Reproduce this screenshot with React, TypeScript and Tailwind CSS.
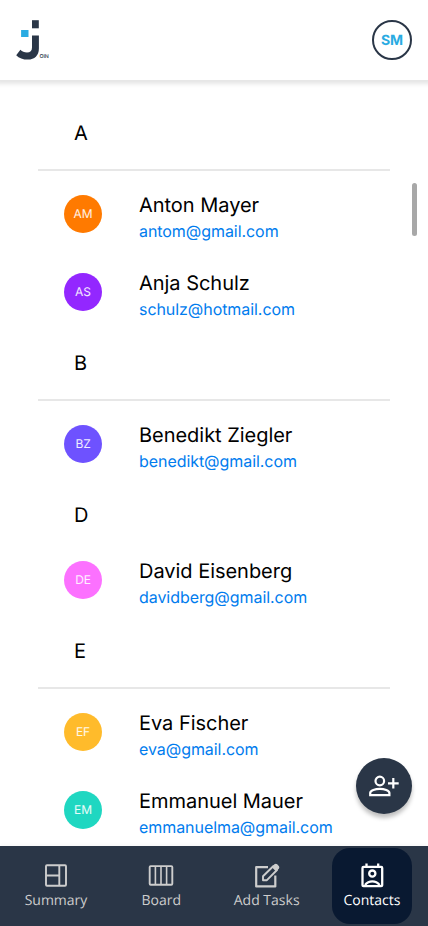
import React from "react";

type Contact = { initials: string; name: string; email: string; color: string };
type Group = { letter: string; divider: boolean; contacts: Contact[] };

const groups: Group[] = [
  {
    letter: "A",
    divider: true,
    contacts: [
      { initials: "AM", name: "Anton Mayer", email: "antom@gmail.com", color: "bg-[#ff7a00]" },
      { initials: "AS", name: "Anja Schulz", email: "schulz@hotmail.com", color: "bg-[#9327ff]" },
    ],
  },
  {
    letter: "B",
    divider: true,
    contacts: [{ initials: "BZ", name: "Benedikt Ziegler", email: "benedikt@gmail.com", color: "bg-[#6e52ff]" }],
  },
  {
    letter: "D",
    divider: false,
    contacts: [{ initials: "DE", name: "David Eisenberg", email: "davidberg@gmail.com", color: "bg-[#fc71ff]" }],
  },
  {
    letter: "E",
    divider: true,
    contacts: [
      { initials: "EF", name: "Eva Fischer", email: "eva@gmail.com", color: "bg-[#ffbb2b]" },
      { initials: "EM", name: "Emmanuel Mauer", email: "emmanuelma@gmail.com", color: "bg-[#1fd7c1]" },
    ],
  },
];

function Logo() {
  return (
    <div className="flex items-end">
      <svg width="23" height="40" viewBox="0 0 23 40" className="block">
        <rect x="16" y="0.2" width="6.8" height="8.1" fill="#2a3647" />
        <rect x="5.1" y="10" width="7.4" height="7" fill="#29abe2" />
        <path
          d="M16 15.4H22.9V28.5C22.9 35.5 18.5 39.6 12 39.6C7 39.6 3 38.2 0.2 35.2L4.4 29.8C6.2 31.6 8.2 32.6 11 32.6C14.3 32.6 16 31 16 27.5Z"
          fill="#2a3647"
        />
      </svg>
      <span className="ml-[0.5px] text-[5.3px] leading-[6px] font-medium tracking-[-0.1px] text-[#2a3647]">OIN</span>
    </div>
  );
}

function SummaryIcon() {
  return (
    <svg width="32" height="32" viewBox="0 0 32 32" fill="none" stroke="currentColor" strokeWidth="1.9">
      <rect x="6" y="5.2" width="20" height="20.6" rx="1" />
      <path d="M19.3 5.2V25.8M6 15.5H19.3" />
    </svg>
  );
}

function BoardIcon() {
  return (
    <svg width="32" height="32" viewBox="0 0 32 32" fill="none" stroke="currentColor" strokeWidth="1.9">
      <rect x="4.7" y="6.1" width="22.6" height="18.6" rx="1" />
      <path d="M10.4 6.1V24.7M16 6.1V24.7M21.6 6.1V24.7" strokeWidth="1.6" />
    </svg>
  );
}

function AddTaskIcon() {
  return (
    <svg width="32" height="32" viewBox="0 0 32 32" fill="none" stroke="currentColor" strokeWidth="2.2" strokeLinejoin="round">
      <path d="M17 7.2H5.2V26.4H24.3V15.5" />
      <path d="M12 20.2V16.2L22.2 6.2L26 10L15.9 20.2Z" strokeWidth="1.9" />
      <path d="M21.6 6.9L23.9 4.7Q24.8 4 25.7 4.8L27.3 6.4Q28 7.3 27.3 8.2L25.1 10.4Z" fill="currentColor" strokeWidth="1.4" />
    </svg>
  );
}

function ContactsIcon() {
  return (
    <svg width="32" height="32" viewBox="0 0 32 32" fill="none" stroke="currentColor" strokeWidth="2.3">
      <rect x="6.5" y="6.9" width="19.7" height="19.3" rx="1" />
      <path d="M10.5 3.6V7M22.2 3.6V7" />
      <circle cx="16.3" cy="13.6" r="3.1" />
      <path d="M9 25C11.2 22.2 13.6 21.3 16.3 21.3S21.4 22.2 23.6 25" />
    </svg>
  );
}

function AddPersonIcon() {
  return (
    <svg width="32" height="32" viewBox="0 0 32 32" fill="none" stroke="currentColor" strokeWidth="2.2">
      <circle cx="11.8" cy="11" r="4.3" />
      <path d="M2.2 25.2V23C2.2 20.4 7.3 18.8 11.8 18.8S21.4 20.4 21.4 23V25.2Z" />
      <path d="M25.3 8V18.6M20 13.3H30.7" />
    </svg>
  );
}

const navItems = [
  { label: "Summary", icon: <SummaryIcon />, active: false },
  { label: "Board", icon: <BoardIcon />, active: false },
  { label: "Add Tasks", icon: <AddTaskIcon />, active: false },
  { label: "Contacts", icon: <ContactsIcon />, active: true },
];

function ContactRow({ contact }: { contact: Contact }) {
  return (
    <div className="flex h-[78px] items-center pl-[26px]">
      <div
        className={`mb-2 flex size-[38px] shrink-0 items-center justify-center rounded-full text-xs tracking-[-0.1px] text-white/90 ${contact.color}`}
      >
        {contact.initials}
      </div>
      <div className="mb-0.5 ml-[37px] flex flex-col">
        <span className="text-xl leading-7 tracking-[-0.03px] text-black">{contact.name}</span>
        <span className="text-base leading-6 tracking-[-0.06px] text-[#007cee]">{contact.email}</span>
      </div>
    </div>
  );
}

export default function App() {
  return (
    <div className="relative flex h-[926px] w-[428px] flex-col overflow-hidden bg-white font-['Inter',sans-serif] [text-rendering:geometricPrecision]">
      <header className="z-10 flex h-20 shrink-0 items-center justify-between bg-white px-4 shadow-[0_0_4px_4px_rgba(0,0,0,0.1)]">
        <Logo />
        <div className="flex size-10 items-center justify-center rounded-full border-2 border-[#2a3647] pt-0.5 text-sm font-bold text-[#29abe2]">
          SM
        </div>
      </header>

      <main className="min-h-0 flex-1 overflow-hidden pt-[25px] pr-[38px] pl-[38px]">
        {groups.map((group) => (
          <section key={group.letter}>
            <h2 className="flex h-14 items-center pl-9 text-xl text-black">{group.letter}</h2>
            {group.divider ? <div className="my-2 h-0.5 bg-[#e7e7e7]" /> : <div className="h-0.5" />}
            {group.contacts.map((contact) => (
              <ContactRow key={contact.email} contact={contact} />
            ))}
          </section>
        ))}
      </main>

      <div className="absolute top-[183px] left-[412px] h-[53px] w-[5px] rounded-full bg-[#a8a8a8]" />
      <button
        aria-label="Add contact"
        className="absolute top-[758px] left-[356px] flex size-14 items-center justify-center rounded-full bg-[#2a3647] text-white shadow-[0_4px_4px_rgba(0,0,0,0.25)]"
      >
        <AddPersonIcon />
      </button>

      <nav className="z-10 flex h-20 shrink-0 items-center justify-between bg-[#2a3647] px-4 font-['Open_Sans',sans-serif] shadow-[0_-1px_4px_rgba(0,0,0,0.04)]">
        {navItems.map((item) => (
          <div
            key={item.label}
            className={`flex h-[76px] w-20 flex-col items-center pt-3 ${
              item.active ? "rounded-[18px] bg-[#091931] text-white" : "text-[#cdcdcd]"
            }`}
          >
            {item.icon}
            <span className="text-sm leading-[18px] whitespace-nowrap">{item.label}</span>
          </div>
        ))}
      </nav>
    </div>
  );
}
